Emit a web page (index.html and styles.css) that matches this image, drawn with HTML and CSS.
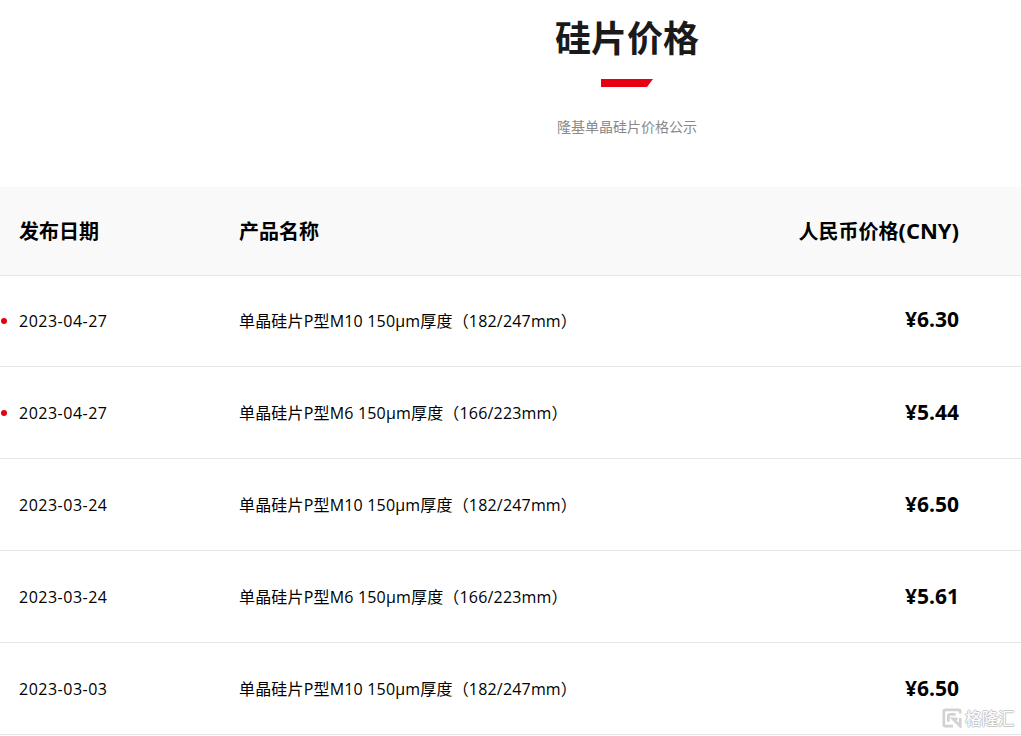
FILE: index.html
```html
<!DOCTYPE html>
<html lang="zh-CN">
<head>
<meta charset="utf-8">
<title>硅片价格</title>
<link rel="stylesheet" href="styles.css">
</head>
<body>
<header class="intro">
  <h1 class="title">硅片价格</h1>
  <div class="accent"><svg width="52" height="8" viewBox="0 0 52 8"><polygon points="0,0 52,0 46,8 0,8" fill="#e60012"/></svg></div>
  <p class="subtitle">隆基单晶硅片价格公示</p>
</header>
<section class="table">
  <div class="row head">
    <div class="date">发布日期</div><div class="name">产品名称</div><div class="price">人民币价格<span class="latin">(CNY)</span></div>
  </div>
  <div class="row first new">
    <div class="date">2023-04-27</div><div class="name">单晶硅片P型M10 150μm厚度（182/247mm）</div><div class="price">¥6.30</div>
  </div>
  <div class="row new">
    <div class="date">2023-04-27</div><div class="name">单晶硅片P型M6 150μm厚度（166/223mm）</div><div class="price">¥5.44</div>
  </div>
  <div class="row">
    <div class="date">2023-03-24</div><div class="name">单晶硅片P型M10 150μm厚度（182/247mm）</div><div class="price">¥6.50</div>
  </div>
  <div class="row">
    <div class="date">2023-03-24</div><div class="name">单晶硅片P型M6 150μm厚度（166/223mm）</div><div class="price">¥5.61</div>
  </div>
  <div class="row">
    <div class="date">2023-03-03</div><div class="name">单晶硅片P型M10 150μm厚度（182/247mm）</div><div class="price">¥6.50</div>
  </div>
</section>
<div class="watermark">
  <svg width="20" height="20" viewBox="0 0 22 22" fill="none" stroke="#d2d2d2" stroke-width="3"><path d="M20 6V3.500Q20 2 18.500 2H3.500Q2 2 2 3.500V18.500Q2 20 3.500 20H12"/><path d="M7 7H15M7 7V15M20 11V20L12 12H17"/></svg>
  <span class="mark-text">格隆汇</span>
</div>
</body>
</html>
```
FILE: styles.css
```css
* { box-sizing: border-box; }
html, body { margin: 0; padding: 0; }
body {
  position: relative;
  height: 736px;
  overflow: hidden;
  background: #fff;
  color: #000;
  font-family: "Open Sans", "Noto Sans CJK SC", sans-serif;
}
.intro {
  height: 187px;
  padding-left: 233px;
  padding-top: 11px;
  display: flex;
  flex-direction: column;
  align-items: center;
}
.title {
  margin: 0;
  font-family: "Noto Sans CJK SC", sans-serif;
  font-size: 36px;
  line-height: 50px;
  font-weight: 700;
  color: #1a1a1a;
}
.accent { margin-top: 18px; height: 8px; line-height: 0; }
.subtitle {
  margin: 29px 0 0;
  font-family: "Noto Sans CJK SC", sans-serif;
  font-size: 14px;
  line-height: 20px;
  color: #8a8a8a;
}
.row {
  position: relative;
  display: flex;
  align-items: center;
  height: 92px;
  padding: 0 62px 2px 19px;
  border-bottom: 1px solid #e6e6e6;
  font-size: 16px;
  letter-spacing: 0.18px;
}
.head {
  height: 89px;
  background: #f9f9f9;
  font-size: 20px;
  font-weight: 700;
  letter-spacing: 0;
}
.first { height: 91px; }
.date { width: 220px; flex: none; letter-spacing: 0.5px; margin-top: 2px; }
.name { flex: 1; }
.price { font-size: 21px; font-weight: 700; text-align: right; letter-spacing: 0; }
.first .price { margin-bottom: 2px; }
.head .date, .head .name { letter-spacing: 0; margin-top: 0; }
.head .price { font-size: 20px; }
.latin { font-size: 22px; line-height: 20px; }
.new::before {
  content: "";
  position: absolute;
  left: 1px;
  top: 50%;
  width: 6px;
  height: 6px;
  margin-top: -3px;
  border-radius: 50%;
  background: #e60012;
}
.watermark {
  position: absolute;
  left: 942px;
  top: 706px;
  display: flex;
  align-items: center;
  gap: 3px;
  height: 24px;
}
.mark-text {
  font-family: "Noto Sans CJK SC", sans-serif;
  font-size: 16.500px;
  line-height: 24px;
  color: #fff;
  text-shadow: 1px 0 0 #c8c8c8, -1px 0 0 #c8c8c8, 0 1px 0 #c8c8c8, 0 -1px 0 #c8c8c8;
}
```
